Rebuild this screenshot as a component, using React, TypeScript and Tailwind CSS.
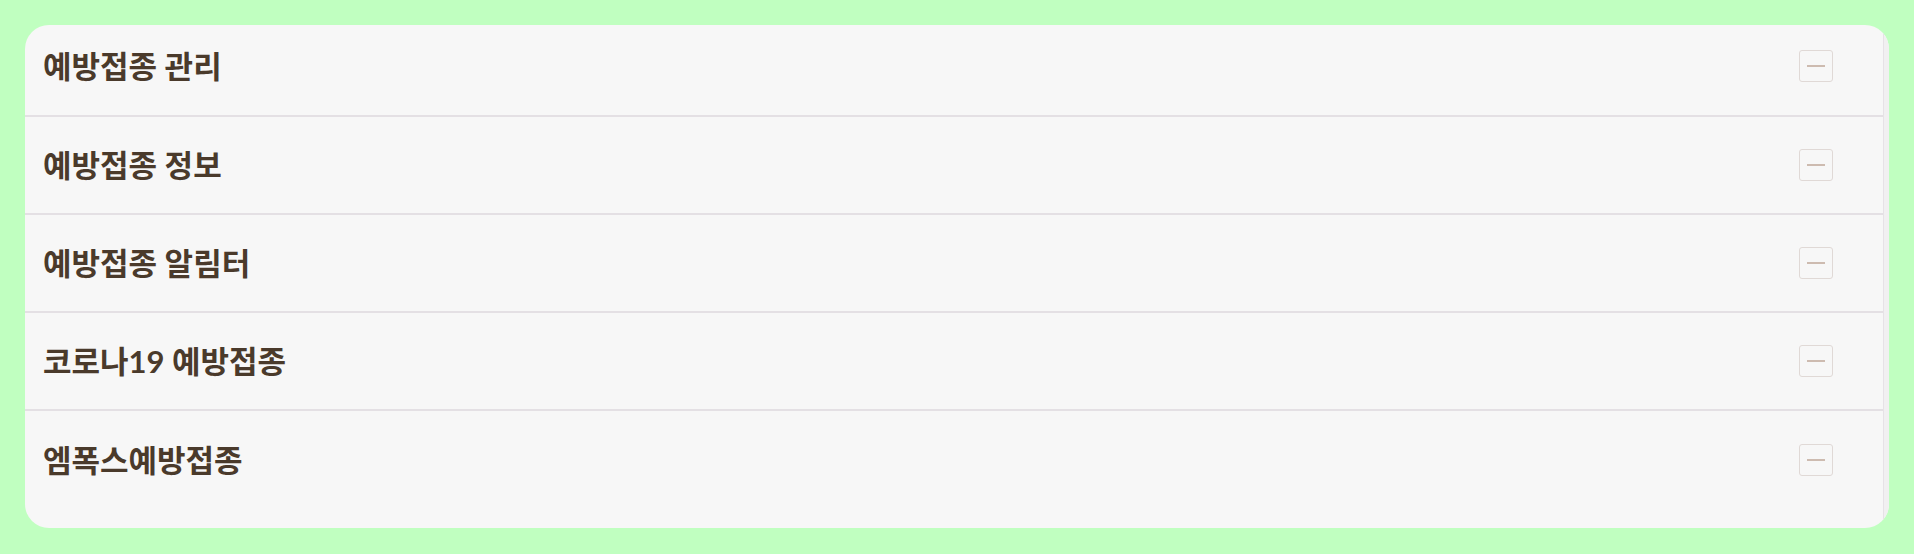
import React from 'react';

const items = ['예방접종 관리', '예방접종 정보', '예방접종 알림터', '코로나19 예방접종', '엠폭스예방접종'];

const MinusBox: React.FC = () => (
  <button className="w-[34px] h-[32px] rounded-[3px] border border-[#e0d9d6] bg-[#f7f7f7] flex items-center justify-center">
    <span className="block w-[18px] h-[2px] bg-[#cdbbb0]" />
  </button>
);

export default function App() {
  return (
    <div className="w-[1914px] h-[554px] bg-[#c0ffc0] pt-[25px] pl-[25px] pr-[25px] pb-[26px]">
      <div className="h-full rounded-[24px] bg-[#f7f7f7] overflow-hidden flex">
        <div className="flex-1 flex flex-col">
          {items.map((label, i) => {
            const last = i === items.length - 1;
            const h = i === 0 ? 'h-[92px] pb-[8px]' : 'h-[98px]';
            return (
              <div
                key={label}
                className={`${h} shrink-0 flex items-center pl-[18px] pr-[50px] ${last ? '' : 'border-b-2 border-[#e4e0e4]'}`}
              >
                <span
                  className="flex-1 text-[31px] font-bold text-[#4a3a2b] leading-none"
                  style={{ fontFamily: 'Lato, "Noto Sans CJK KR", sans-serif' }}
                >
                  {label}
                </span>
                <MinusBox />
              </div>
            );
          })}
        </div>
        <div className="w-[6px] border-l border-[#e6e2e6] bg-[#f1f0f1]" />
      </div>
    </div>
  );
}
